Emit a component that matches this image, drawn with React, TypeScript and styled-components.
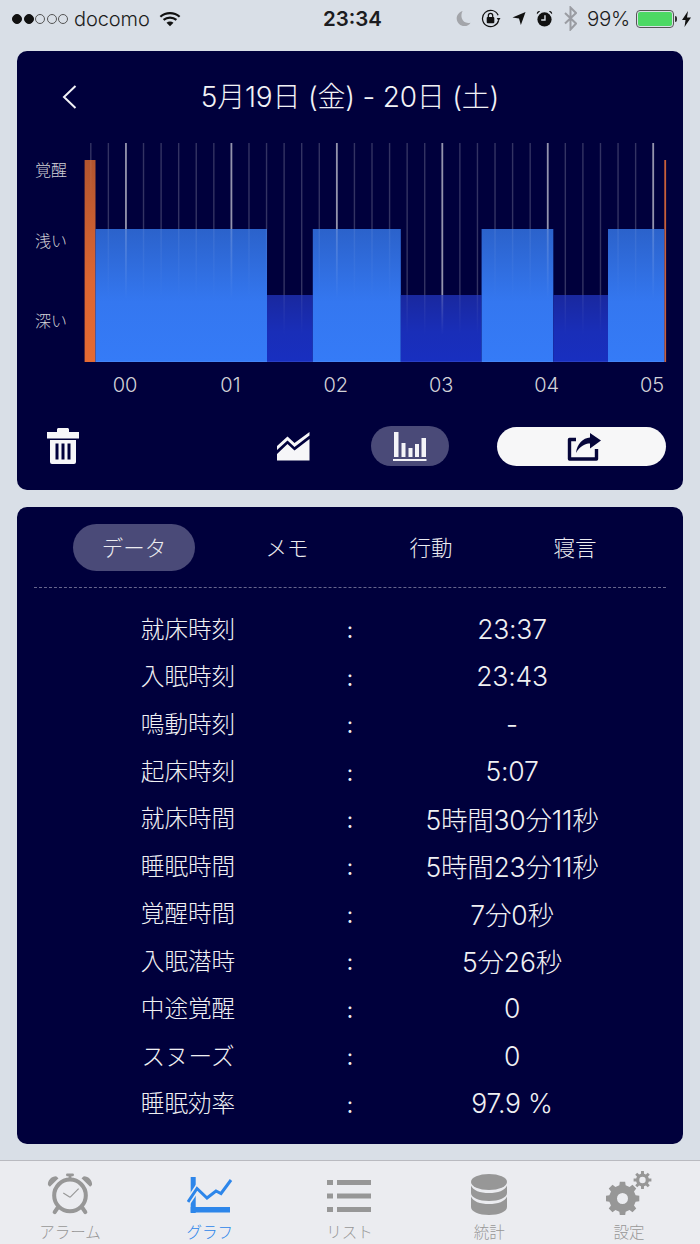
import React from "react";
import styled, { createGlobalStyle } from "styled-components";

const SANS = `"Inter", "Noto Sans CJK JP", sans-serif`;

const Global = createGlobalStyle`
  html, body { margin: 0; padding: 0; background: #d9dfe7; }
  body { font-family: ${SANS}; }
`;

const Page = styled.div`
  width: 700px;
  height: 1244px;
  overflow: hidden;
  display: flex;
  flex-direction: column;
  background: #d9dfe7;
`;

const StatusBar = styled.div`
  height: 37px;
  padding: 0 9px 0 12px;
  display: grid;
  grid-template-columns: 1fr auto 1fr;
  align-items: center;
  color: #1c1c20;
  font-size: 19px;
`;
const StatusLeft = styled.div`
  display: flex;
  align-items: center;
`;
const Dots = styled.div`
  display: flex;
  gap: 1.5px;
  margin-right: 6px;
`;
const Dot = styled.span<{ $on: boolean }>`
  width: 10px;
  height: 10px;
  border-radius: 50%;
  box-sizing: border-box;
  border: 1px solid ${(p) => (p.$on ? "#111" : "#555")};
  background: ${(p) => (p.$on ? "#111" : "transparent")};
`;
const Carrier = styled.span`
  font-family: "Inter", sans-serif;
  font-weight: 300;
  font-size: 20px;
  letter-spacing: -0.1px;
  margin-right: 9px;
`;
const Clock = styled.div`
  font-family: "Inter", sans-serif;
  font-size: 20.5px;
  font-weight: 600;
  margin-left: 2px;
`;
const StatusRight = styled.div`
  display: flex;
  align-items: center;
  justify-content: flex-end;
  gap: 10.5px;
`;
const Percent = styled.span`
  font-family: "Inter", sans-serif;
  font-weight: 300;
  font-size: 20.5px;
  letter-spacing: -0.3px;
  margin-right: -5px;
`;
const Battery = styled.div`
  width: 38px;
  height: 18px;
  box-sizing: border-box;
  border: 1px solid #555;
  border-radius: 4px;
  padding: 1px;
  position: relative;
  margin-right: -2px;
`;
const BatteryFill = styled.div`
  height: 100%;
  border-radius: 2px;
  background: #4cd964;
`;
const BatteryCap = styled.span`
  position: absolute;
  right: -4px;
  top: 5px;
  width: 2px;
  height: 6px;
  border-radius: 0 2px 2px 0;
  background: #333;
`;

const Main = styled.div`
  flex: 1;
  padding: 14px 17px 16px;
  display: flex;
  flex-direction: column;
  gap: 17px;
`;
const Card = styled.section`
  background: #00003c;
  border-radius: 10px;
`;
const ChartCard = styled(Card)`
  height: 439px;
  display: flex;
  flex-direction: column;
`;
const Header = styled.header`
  height: 92px;
  box-sizing: border-box;
  padding: 0 30px 0 44px;
  display: grid;
  grid-template-columns: 1fr auto 1fr;
  align-items: center;
  color: #f2f2f6;
`;
const BackIcon = styled.svg`
  display: block;
  width: 16px;
  height: 26px;
`;
const Title = styled.h1`
  margin: 0;
  font-weight: 300;
  font-size: 28px;
  line-height: 34px;
  letter-spacing: -0.2px;
  white-space: nowrap;
  transform: translateX(-7px);
`;
const ChartSvg = styled.svg`
  display: block;
  width: 666px;
  height: 260px;
  text {
    font-family: ${SANS};
    font-weight: 300;
  }
`;
const Toolbar = styled.div`
  display: flex;
  align-items: center;
  height: 40px;
  margin-top: 23px;
  padding: 0 17px 0 30px;
`;
const TrashButton = styled.div`
  margin-right: auto;
  display: flex;
`;
const ToolIcon = styled.div`
  width: 33px;
  display: flex;
  justify-content: center;
`;
const BarsPill = styled.div`
  width: 78px;
  height: 40px;
  margin: 0 48px 0 61px;
  border-radius: 20px;
  background: #4a4a78;
  display: flex;
  align-items: center;
  justify-content: center;
`;
const ShareButton = styled.div`
  width: 169px;
  height: 39px;
  box-sizing: border-box;
  padding-left: 5px;
  border-radius: 20px;
  background: #f7f7f8;
  display: flex;
  align-items: center;
  justify-content: center;
`;

const DataCard = styled(Card)`
  height: 637px;
  box-sizing: border-box;
  padding: 17px 17px 0;
`;
const Tabs = styled.div`
  display: grid;
  grid-template-columns: 142px 144px 144px 144px;
  padding-left: 39px;
  height: 47px;
  align-items: center;
`;
const Tab = styled.div<{ $active?: boolean }>`
  width: ${(p) => (p.$active ? "122px" : "auto")};
  height: 47px;
  box-sizing: border-box;
  padding-bottom: 3px;
  border-radius: 24px;
  background: ${(p) => (p.$active ? "#4a4a78" : "transparent")};
  color: #ececf0;
  font-family: "Noto Sans CJK JP", sans-serif;
  font-weight: 300;
  font-size: 21.5px;
  display: flex;
  align-items: center;
  justify-content: center;
`;
const Rule = styled.div`
  margin-top: 16px;
  border-top: 1px dashed #66668c;
`;
const Rows = styled.div`
  margin-top: 17.5px;
  padding: 0 2px;
`;
const Row = styled.div`
  height: 47.45px;
  display: grid;
  grid-template-columns: 1fr 20px 1fr;
  align-items: center;
  justify-items: center;
  color: #f0f0f3;
  font-weight: 300;
`;
const Label = styled.div`
  font-family: "Noto Sans CJK JP", sans-serif;
  font-weight: 300;
  font-size: 23.6px;
  padding-bottom: 3px;
`;
const Sep = styled.div`
  font-family: "Inter", sans-serif;
  font-size: 22px;
  font-weight: 400;
  padding-top: 2px;
`;
const Value = styled.div`
  font-family: ${SANS};
  font-size: 26.5px;
  letter-spacing: -0.2px;
  white-space: nowrap;
  padding-bottom: 1px;
`;

const TabBar = styled.nav`
  height: 84px;
  box-sizing: border-box;
  border-top: 1.5px solid #b9bac0;
  background: #ebecf0;
  display: grid;
  grid-template-columns: repeat(5, 139.8px);
`;
const TabItem = styled.div<{ $active?: boolean }>`
  display: flex;
  flex-direction: column;
  align-items: center;
  color: ${(p) => (p.$active ? "#2d86ea" : "#979797")};
`;
const TabIconBox = styled.div<{ $lift?: number }>`
  height: 54px;
  width: 56px;
  box-sizing: border-box;
  padding-bottom: ${(p) => p.$lift ?? 0}px;
  display: flex;
  align-items: flex-end;
  justify-content: center;
`;
const TabLabel = styled.span`
  font-family: "Noto Sans CJK JP", sans-serif;
  font-weight: 300;
  font-size: 15.5px;
  line-height: 22px;
  margin-top: 5px;
`;

/* icons */
const gearPath = (cx: number, cy: number, r: number, rt: number, n: number, hole: number) => {
  const pts: string[] = [];
  for (let i = 0; i < n; i++) {
    const a = (i / n) * Math.PI * 2;
    const w = Math.PI / n;
    const seq: [number, number][] = [
      [a - w * 0.6, r],
      [a - w * 0.4, rt],
      [a + w * 0.4, rt],
      [a + w * 0.6, r],
    ];
    seq.forEach(([t, rad]) => pts.push(`${(cx + rad * Math.cos(t)).toFixed(2)} ${(cy + rad * Math.sin(t)).toFixed(2)}`));
  }
  let d = "M" + pts.join("L") + "Z";
  d += `M${cx - hole} ${cy}a${hole} ${hole} 0 1 0 ${hole * 2} 0a${hole} ${hole} 0 1 0 ${-hole * 2} 0Z`;
  return d;
};

const Wifi = () => (
  <svg width="22" height="16" viewBox="0 0 24 17" fill="none" stroke="#111">
    <path d="M1.5 6C7.5 .8 16.5 .8 22.5 6" strokeWidth="2.4" />
    <path d="M5 9.5c4-3.4 10-3.4 14 0" strokeWidth="2.4" />
    <path d="M12 16.5 8.2 12.6c2.2-1.8 5.4-1.8 7.6 0Z" fill="#111" stroke="none" />
  </svg>
);
const Moon = () => (
  <svg width="15" height="17" viewBox="0 0 17 18" fill="#a3a5aa">
    <path d="M7.5 .5C3 2 .5 5.5.8 9.5c.4 4.6 4.2 8 8.7 8 3 0 5.6-1.4 7-3.8-4.7 1.4-8.6-.8-9.8-4.6C5.800 6.300 6 3 7.500 .5Z" />
  </svg>
);
const RotLock = () => (
  <svg width="20" height="19" viewBox="0 0 21 20">
    <path d="M18.500 12A8.600 8.600 0 1 1 18 6.500" fill="none" stroke="#111" strokeWidth="1.300" />
    <path d="M16.500 9.500h4l-2 3Z" fill="#111" />
    <rect x="6" y="8.500" width="8" height="6.500" rx="1" fill="#111" />
    <path d="M7.700 9V7a2.300 2.300 0 0 1 4.600 0v2" fill="none" stroke="#111" strokeWidth="1.300" />
  </svg>
);
const Loc = () => (
  <svg width="14" height="15" viewBox="0 0 15 15" fill="#111">
    <path d="M14.500 .5 9.500 14.500 7.500 7.500 .5 6.500Z" />
  </svg>
);
const AlarmSmall = () => (
  <svg width="17" height="17" viewBox="0 0 18 18">
    <circle cx="9" cy="10" r="7.500" fill="#111" />
    <path d="M1 4.500 4.300 1.300C2.500.5 .3 2.300 1 4.500ZM17 4.500 13.700 1.300C15.500.5 17.700 2.300 17 4.500Z" fill="#111" />
    <path d="M9.500 5.500v5H5.500" fill="none" stroke="#d9dfe7" strokeWidth="1.500" />
  </svg>
);
const Bt = () => (
  <svg width="13" height="25" viewBox="0 0 13 25" fill="none" stroke="#9a9ca2" strokeWidth="2">
    <path d="M1 7l11 10.500-5.500 6V1.500L12 7 1 17.500" />
  </svg>
);
const Bolt = () => (
  <svg width="9" height="16" viewBox="0 0 9 16" fill="#111">
    <path d="M6 0 0 9h3.500L2.500 16 9 6.500H5Z" />
  </svg>
);
const Trash = () => (
  <svg width="32" height="36" viewBox="0 0 32 36" fill="#f6f6f8">
    <path d="M10 4V1.500C10 .7 10.700 0 11.500 0h9c.8 0 1.500.7 1.500 1.500V4h10v6.500H0V4Z" />
    <path fillRule="evenodd" d="M3 12h26v22a2 2 0 0 1-2 2H5a2 2 0 0 1-2-2ZM8.500 15.500v16h3v-16ZM14.500 15.500v16h3v-16ZM20.500 15.500v16h3v-16Z" />
  </svg>
);
const AreaLine = () => (
  <svg width="33" height="29" viewBox="0 0 33 29" fill="#f6f6f8">
    <path d="M0 14 10.500 4.500 17.500 11 32.500 0v3.500L17.500 15 10.500 8.500 0 18Z" />
    <path d="M0 22 10.500 12 17.500 18.500 32.500 7v21.500H0Z" />
  </svg>
);
const BarsIcon = () => (
  <svg width="34" height="29" viewBox="0 0 34 29" fill="#f4f4f8">
    <rect x="1" y="0" width="4.500" height="25" />
    <rect x="8.500" y="11" width="4" height="14" />
    <rect x="15.500" y="16" width="4" height="9" />
    <rect x="22" y="12" width="4" height="13" />
    <rect x="28.500" y="6" width="4.500" height="19" />
    <rect x="0" y="27" width="33.500" height="2" />
  </svg>
);
const ShareIcon = () => (
  <svg width="35" height="29" viewBox="0 0 35 29">
    <path d="M9 7.500H2.500v19.500h27V17" fill="none" stroke="#06063a" strokeWidth="3.400" strokeLinejoin="round" />
    <path d="M9 21C10 12 16 6 23 5.500V1L34 8.500 23 16.500V11.500C18 11.500 13 14 9 21Z" fill="#06063a" />
  </svg>
);
const AlarmIcon = () => (
  <svg width="46" height="43" viewBox="0 0 48 44" fill="#979797">
    <rect x="20" y="1" width="8" height="3" rx="1" />
    <rect x="22.500" y="3" width="3" height="6" />
    <path d="M1 13C.5 8.500 4.500 4 9.500 4l2.500 2L3 15ZM47 13C47.500 8.500 43.500 4 38.500 4L36 6l9 9Z" />
    <circle cx="24" cy="24" r="16.500" fill="none" stroke="#979797" strokeWidth="4.200" />
    <path d="M24 26 33 17M24 26 17 21.500" fill="none" stroke="#979797" strokeWidth="1.200" />
    <path d="M11 37 8 41.500M37 37l3 4.500" fill="none" stroke="#979797" strokeWidth="4.200" strokeLinecap="round" />
  </svg>
);
const GraphIcon = () => (
  <svg width="46" height="36" viewBox="0 0 46 36" fill="#2d86ea">
    <rect x="3.700" y="0" width="5" height="36" />
    <rect x="3.700" y="30" width="39.300" height="5.500" />
    <path d="M1 25 10 11.500 20 21 29 14 34 16.500 44 3" fill="none" stroke="#ebecf0" strokeWidth="6" />
    <path d="M1 25 10 11.500 20 21 29 14 34 16.500 44 3" fill="none" stroke="#2d86ea" strokeWidth="3" />
  </svg>
);
const ListIcon = () => (
  <svg width="44" height="32" viewBox="0 0 44 32" fill="#979797">
    <rect x="0" y="0" width="6" height="5" />
    <rect x="10" y="0" width="34" height="5" />
    <rect x="0" y="13.500" width="6" height="5" />
    <rect x="10" y="13.500" width="34" height="5" />
    <rect x="0" y="27" width="6" height="5" />
    <rect x="10" y="27" width="34" height="5" />
  </svg>
);
const DbIcon = () => (
  <svg width="36" height="41" viewBox="0 0 36 41" fill="#979797">
    <ellipse cx="18" cy="8" rx="18" ry="8" />
    <path d="M0 11.500C2 16.500 9 19 18 19s16-2.500 18-7.500V19c0 4.500-8 8-18 8S0 23.500 0 19Z" />
    <path d="M0 22.500C2 27.500 9 30 18 30s16-2.500 18-7.500V33c0 4.500-8 8-18 8S0 37.500 0 33Z" />
  </svg>
);
const GearIcon = () => (
  <svg width="46" height="44" viewBox="0 0 46 44" fillRule="evenodd" fill="#979797">
    <path d={gearPath(16.5, 27.5, 13.5, 17, 8, 5.5)} />
    <path d={gearPath(36.5, 9, 6.5, 9, 8, 3.2)} />
  </svg>
);

/* chart: coordinates are page pixels, the viewBox maps them onto the card */
const OX = 17;
const OY = 143;
const BASE = 362;
const LIGHT = 229;
const DEEP = 295;
const segments: [number, number, "l" | "d"][] = [
  [95.5, 267, "l"],
  [267, 312.8, "d"],
  [312.8, 400.8, "l"],
  [400.8, 481.6, "d"],
  [481.6, 553.3, "l"],
  [553.3, 608, "d"],
  [608, 664.3, "l"],
];
const ticks = Array.from({ length: 33 }, (_, i) => 90.8 + i * 17.575);
const xLabels = ["00", "01", "02", "03", "04", "05"];
const yLabels: [string, number][] = [["覚醒", 176], ["浅い", 247], ["深い", 327]];
const topAt = (x: number) => {
  const s = segments.find(([a, b]) => x >= a && x < b);
  return s ? (s[2] === "l" ? LIGHT : DEEP) : 160;
};

const Chart = () => (
  <ChartSvg viewBox={`${OX} ${OY} 666 260`}>
    <defs>
      <linearGradient id="lightBar" x1="0" y1="0" x2="0" y2="1">
        <stop offset="0" stopColor="#2b62cb" />
        <stop offset="0.55" stopColor="#3477f0" />
        <stop offset="1" stopColor="#357bf7" />
      </linearGradient>
      <linearGradient id="deepBar" x1="0" y1="0" x2="0" y2="1">
        <stop offset="0" stopColor="#19289f" />
        <stop offset="0.55" stopColor="#192eb8" />
        <stop offset="1" stopColor="#182fc0" />
      </linearGradient>
      <linearGradient id="orangeBar" x1="0" y1="0" x2="0" y2="1">
        <stop offset="0" stopColor="#b3552f" />
        <stop offset="0.6" stopColor="#dc6632" />
        <stop offset="1" stopColor="#e46a33" />
      </linearGradient>
      <linearGradient id="tickFade" x1="0" y1="0" x2="0" y2="1">
        <stop offset="0" stopColor="#fff" stopOpacity="1" />
        <stop offset="1" stopColor="#fff" stopOpacity="0" />
      </linearGradient>
    </defs>
    {ticks.map((x, i) => {
      const bright = (i - 2) % 6 === 0;
      return (
        <rect
          key={x}
          x={x - (bright ? 0.9 : 0.7)}
          y={143}
          width={bright ? 1.8 : 1.4}
          height={topAt(x) - 143}
          fill="#fff"
          fillOpacity={bright ? 0.58 : 0.2}
        />
      );
    })}
    <rect x="84.6" y="160" width="10.9" height={BASE - 160} fill="url(#orangeBar)" />
    <rect x="664.3" y="160" width="1.8" height={BASE - 160} fill="#c9603a" />
    {segments.map(([a, b, k]) => (
      <rect
        key={a}
        x={a}
        y={k === "l" ? LIGHT : DEEP}
        width={b - a}
        height={BASE - (k === "l" ? LIGHT : DEEP)}
        fill={k === "l" ? "url(#lightBar)" : "url(#deepBar)"}
      />
    ))}
    {ticks.map((x, i) => {
      const bright = (i - 2) % 6 === 0;
      const top = topAt(x);
      return (
        <rect
          key={x}
          x={x - (bright ? 0.9 : 0.7)}
          y={top}
          width={bright ? 1.8 : 1.4}
          height={top === LIGHT ? 70 : 40}
          fill="url(#tickFade)"
          opacity={bright ? 0.2 : 0.08}
        />
      );
    })}
    <rect x="95.5" y={BASE - 1} width="568.8" height="1" fill="#fff" fillOpacity="0.08" />
    {yLabels.map(([t, y]) => (
      <text key={t} x="35" y={y} fill="#d2d2d6" fontSize="16">
        {t}
      </text>
    ))}
    {xLabels.map((t, i) => (
      <text key={t} x={125 + i * 105.4} y="392" fill="#d2d2d8" fontSize="20" textAnchor="middle">
        {t}
      </text>
    ))}
  </ChartSvg>
);

const rows: [string, string][] = [
  ["就床時刻", "23:37"],
  ["入眠時刻", "23:43"],
  ["鳴動時刻", "-"],
  ["起床時刻", "5:07"],
  ["就床時間", "5時間30分11秒"],
  ["睡眠時間", "5時間23分11秒"],
  ["覚醒時間", "7分0秒"],
  ["入眠潜時", "5分26秒"],
  ["中途覚醒", "0"],
  ["スヌーズ", "0"],
  ["睡眠効率", "97.9 %"],
];

export default function App() {
  return (
    <Page>
      <Global />
      <StatusBar>
        <StatusLeft>
          <Dots>
            {[1, 1, 0, 0, 0].map((on, i) => (
              <Dot key={i} $on={!!on} />
            ))}
          </Dots>
          <Carrier>docomo</Carrier>
          <Wifi />
        </StatusLeft>
        <Clock>23:34</Clock>
        <StatusRight>
          <Moon />
          <RotLock />
          <Loc />
          <AlarmSmall />
          <Bt />
          <Percent>99%</Percent>
          <Battery>
            <BatteryFill />
            <BatteryCap />
          </Battery>
          <Bolt />
        </StatusRight>
      </StatusBar>
      <Main>
        <ChartCard>
          <Header>
            <BackIcon viewBox="0 0 16 26" fill="none" stroke="#f2f2f6" strokeWidth="2">
              <path d="M14.500 2 3 13l11.500 11" />
            </BackIcon>
            <Title>5月19日 (金) - 20日 (土)</Title>
          </Header>
          <Chart />
          <Toolbar>
            <TrashButton>
              <Trash />
            </TrashButton>
            <ToolIcon>
              <AreaLine />
            </ToolIcon>
            <BarsPill>
              <BarsIcon />
            </BarsPill>
            <ShareButton>
              <ShareIcon />
            </ShareButton>
          </Toolbar>
        </ChartCard>
        <DataCard>
          <Tabs>
            <Tab $active>データ</Tab>
            <Tab>メモ</Tab>
            <Tab>行動</Tab>
            <Tab>寝言</Tab>
          </Tabs>
          <Rule />
          <Rows>
            {rows.map(([k, v]) => (
              <Row key={k}>
                <Label>{k}</Label>
                <Sep>:</Sep>
                <Value>{v}</Value>
              </Row>
            ))}
          </Rows>
        </DataCard>
      </Main>
      <TabBar>
        <TabItem>
          <TabIconBox>
            <AlarmIcon />
          </TabIconBox>
          <TabLabel>アラーム</TabLabel>
        </TabItem>
        <TabItem $active>
          <TabIconBox $lift={2}>
            <GraphIcon />
          </TabIconBox>
          <TabLabel>グラフ</TabLabel>
        </TabItem>
        <TabItem>
          <TabIconBox $lift={3}>
            <ListIcon />
          </TabIconBox>
          <TabLabel>リスト</TabLabel>
        </TabItem>
        <TabItem>
          <TabIconBox>
            <DbIcon />
          </TabIconBox>
          <TabLabel>統計</TabLabel>
        </TabItem>
        <TabItem>
          <TabIconBox>
            <GearIcon />
          </TabIconBox>
          <TabLabel>設定</TabLabel>
        </TabItem>
      </TabBar>
    </Page>
  );
}
